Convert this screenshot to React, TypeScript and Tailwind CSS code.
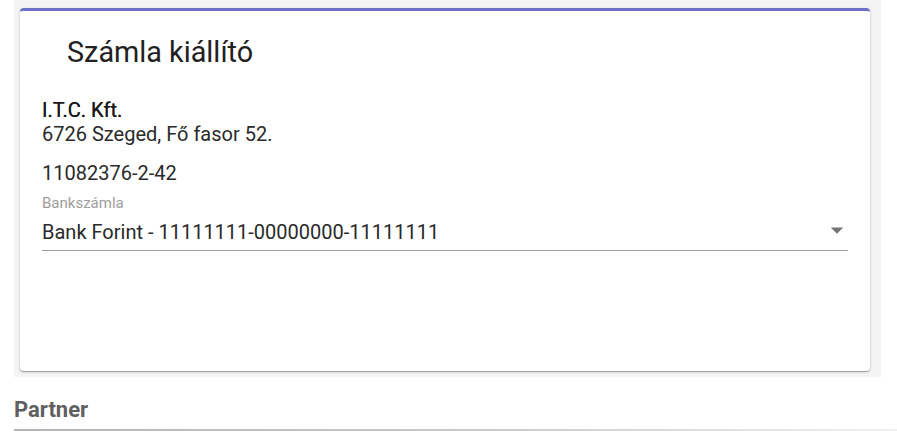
export default function App() {
  return (
    <div className="w-[897px] h-[437px] bg-white font-['Roboto',sans-serif] overflow-hidden">
      <div className="ml-[14px] w-[867px] bg-[#f4f4f4] pt-[8px] pb-[6px] pl-[6px] pr-[11px]">
        <div className="h-[363px] rounded-[4px] bg-white border-t-[3px] border-[#6b6fc8] shadow-[0_1px_3px_rgba(0,0,0,0.2),0_1px_1px_rgba(0,0,0,0.14),0_2px_1px_-1px_rgba(0,0,0,0.12)] px-[22px]">
          <h2 className="pl-[25px] pt-[24px] text-[28.8px] leading-[34px] text-[#212121]">Számla kiállító</h2>
          <div className="mt-[29px] text-[#2a2a2a]">
            <div className="text-[20px] leading-[24px] text-[#1a1a1a] [text-shadow:0_0_0.4px_#1a1a1a]">I.T.C. Kft.</div>
            <div className="text-[20px] leading-[24px]">6726 Szeged, Fő fasor 52.</div>
            <div className="mt-[15px] text-[20px] leading-[24px]">11082376-2-42</div>
          </div>
          <div className="mt-[9px] w-[806px]">
            <div className="text-[15px] leading-[18px] text-[#9e9e9e]">Bankszámla</div>
            <div className="relative border-b border-[#9e9e9e] pb-[4px] pt-[7px]">
              <span className="text-[20px] leading-[26px] text-[#2a2a2a]">Bank Forint - 11111111-00000000-11111111</span>
              <svg width="30" height="30" viewBox="0 0 24 24" className="absolute right-[-4px] top-[3px]">
                <path d="M7 10l5 5 5-5z" fill="#757575" />
              </svg>
            </div>
          </div>
        </div>
      </div>
      <div className="ml-[14px] mt-[20px] text-[22px] leading-[26px] font-bold text-[#5f5f5f]">Partner</div>
      <div className="ml-[14px] mt-[6px] h-[2px] bg-gradient-to-r from-[#b5b5b5] via-[#c8c8c8] to-[#f0f0f0]" />
    </div>
  );
}
